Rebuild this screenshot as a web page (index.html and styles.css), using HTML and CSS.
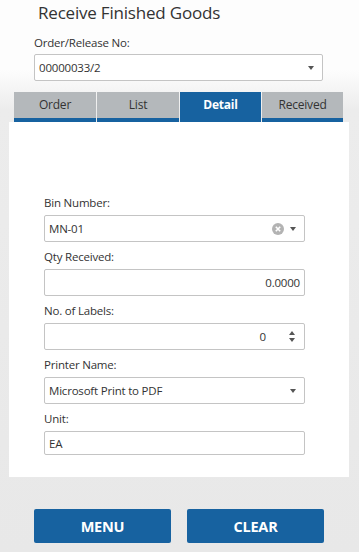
FILE: index.html
```html
<!DOCTYPE html>
<html lang="en">
<head>
    <meta charset="UTF-8">
    <meta name="viewport" content="width=device-width, initial-scale=1.0">
    <title>Receive Finished Goods</title>
    <link rel="stylesheet" href="styles.css">
</head>
<body>
    <div class="page">
        <h1 class="page-title">Receive Finished Goods</h1>

        <div class="order-field">
            <label class="field-label">Order/Release No:</label>
            <div class="input-box select-box">
                <span class="input-value">00000033/2</span>
                <span class="caret"></span>
            </div>
        </div>

        <div class="tabs">
            <div class="tab tab-order">Order</div>
            <div class="tab tab-list">List</div>
            <div class="tab tab-detail active">Detail</div>
            <div class="tab tab-received">Received</div>
        </div>

        <div class="detail-panel">
            <div class="form-control">
                <label class="field-label">Bin Number:</label>
                <div class="input-box select-box">
                    <span class="input-value">MN-01</span>
                    <svg class="clear-icon" width="12" height="12" viewBox="0 0 12 12">
                        <circle cx="6" cy="6" r="6" fill="#b3b3b3"/>
                        <path d="M3.8 3.8 L8.2 8.2 M8.2 3.8 L3.8 8.2" stroke="#fff" stroke-width="1.6"/>
                    </svg>
                    <span class="caret"></span>
                </div>
            </div>

            <div class="form-control">
                <label class="field-label">Qty Received:</label>
                <div class="input-box number-box">
                    <span class="input-value">0.0000</span>
                </div>
            </div>

            <div class="form-control">
                <label class="field-label">No. of Labels:</label>
                <div class="input-box number-box spinner-box">
                    <span class="input-value">0</span>
                    <span class="spinner">
                        <span class="spin-up"></span>
                        <span class="spin-down"></span>
                    </span>
                </div>
            </div>

            <div class="form-control">
                <label class="field-label">Printer Name:</label>
                <div class="input-box select-box">
                    <span class="input-value">Microsoft Print to PDF</span>
                    <span class="caret"></span>
                </div>
            </div>

            <div class="form-control">
                <label class="field-label">Unit:</label>
                <div class="input-box unit-box">
                    <span class="input-value">EA</span>
                </div>
            </div>
        </div>

        <div class="actions">
            <button class="action-btn">MENU</button>
            <button class="action-btn">CLEAR</button>
        </div>
    </div>
</body>
</html>
```

FILE: styles.css
```css
body {
    margin: 0;
    font-family: 'Open Sans', 'Noto Sans', sans-serif;
    color: #333;
    background: linear-gradient(180deg, #fdfdfd 0px, #fdfdfd 70px, #ececec 110px, #e8e8e8 100%);
    min-height: 552px;
}

.page {
    width: 359px;
}

.page-title {
    margin: 0;
    padding: 2px 0 0 38px;
    font-size: 17px;
    font-weight: 400;
    line-height: 22px;
    color: #333;
    letter-spacing: -0.2px;
}

.field-label {
    display: block;
    font-size: 11.5px;
    line-height: 14px;
    color: #333;
    margin-bottom: 5px;
    letter-spacing: -0.2px;
}

.order-field {
    margin: 12px 0 0 34px;
    width: 289px;
}

.order-field .field-label {
    margin-bottom: 4px;
}

.input-box {
    box-sizing: border-box;
    height: 27px;
    border: 1px solid #c4c4c4;
    border-radius: 2px;
    background: #fff;
    display: flex;
    align-items: center;
    padding: 0 8px 0 4px;
    font-size: 11.5px;
    color: #333;
    letter-spacing: -0.2px;
}

.input-value {
    flex: 1;
}

.caret {
    width: 0;
    height: 0;
    border-left: 3.5px solid transparent;
    border-right: 3.5px solid transparent;
    border-top: 4px solid #555;
    margin-left: 6px;
}

.clear-icon {
    display: block;
}

.number-box .input-value {
    text-align: right;
}

.number-box {
    padding-right: 4px;
}

.spinner-box {
    padding-right: 9px;
}

.spinner-box .input-value {
    margin-right: 23px;
}

.spinner {
    display: flex;
    flex-direction: column;
    gap: 3px;
}

.spin-up {
    width: 0;
    height: 0;
    border-left: 3.5px solid transparent;
    border-right: 3.5px solid transparent;
    border-bottom: 4px solid #555;
}

.spin-down {
    width: 0;
    height: 0;
    border-left: 3.5px solid transparent;
    border-right: 3.5px solid transparent;
    border-top: 4px solid #555;
}

.unit-box {
    height: 24px;
}

.tabs {
    display: flex;
    gap: 1px;
    margin: 11px 0 0 14px;
    width: 330px;
}

.tab {
    box-sizing: border-box;
    height: 30px;
    background: #b4b8bb;
    border-bottom: 4px solid #1762a0;
    font-size: 12px;
    color: #333;
    text-align: center;
    line-height: 26px;
    letter-spacing: -0.2px;
}

.tab-order {
    width: 82px;
}

.tab-list {
    width: 82px;
}

.tab-detail {
    width: 81px;
}

.tab-received {
    width: 81px;
}

.tab.active {
    background: #1762a0;
    color: #fff;
    font-weight: 700;
}

.detail-panel {
    box-sizing: border-box;
    width: 340px;
    margin-left: 9px;
    background: #fff;
    padding: 74px 0 22px 35px;
}

.form-control {
    width: 261px;
    margin-bottom: 8px;
}

.form-control:last-child {
    margin-bottom: 0;
}

.actions {
    display: flex;
    gap: 16px;
    margin: 32px 0 0 34px;
}

.action-btn {
    width: 137px;
    height: 34px;
    border: none;
    border-radius: 2px;
    background: #1762a0;
    color: #fff;
    font-family: 'Open Sans', 'Noto Sans', sans-serif;
    font-size: 14.5px;
    font-weight: 700;
    letter-spacing: -0.2px;
    cursor: pointer;
}
```
